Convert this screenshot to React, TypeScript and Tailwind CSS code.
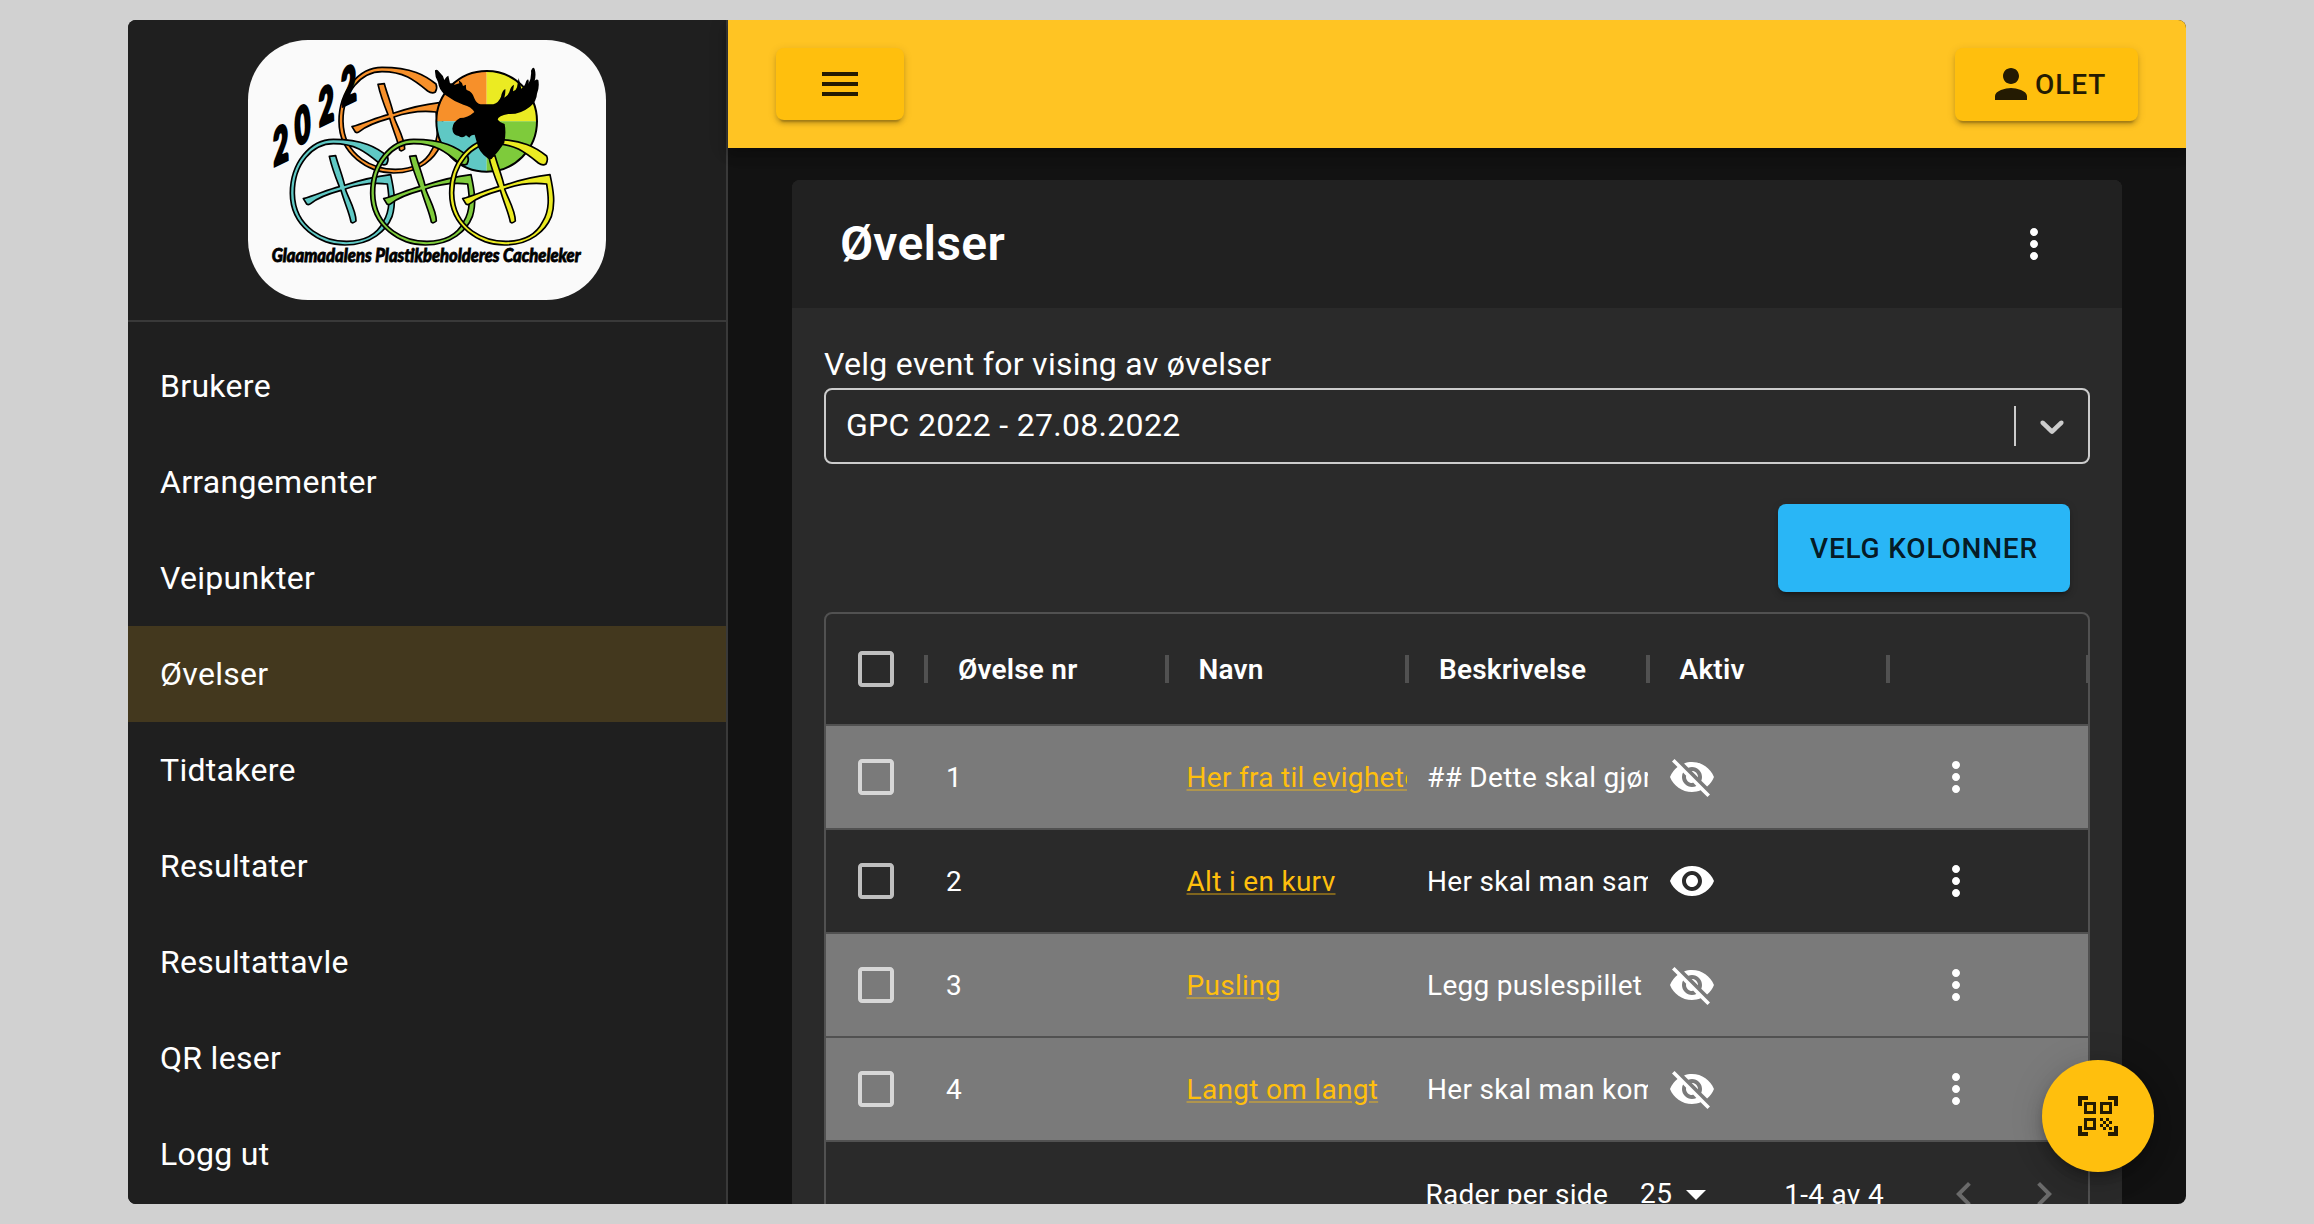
import React from "react";
import {
  MdArrowDropDown,
  MdCheckBoxOutlineBlank,
  MdKeyboardArrowLeft,
  MdKeyboardArrowRight,
  MdMenu,
  MdMoreVert,
  MdPerson,
  MdQrCodeScanner,
  MdVisibility,
  MdVisibilityOff,
} from "react-icons/md";

const menuItems = [
  "Brukere",
  "Arrangementer",
  "Veipunkter",
  "Øvelser",
  "Tidtakere",
  "Resultater",
  "Resultattavle",
  "QR leser",
  "Logg ut",
];

const columns = ["Øvelse nr", "Navn", "Beskrivelse", "Aktiv", ""];

const rows = [
  { nr: 1, name: "Her fra til evigheten", desc: "## Dette skal gjøres", active: false },
  { nr: 2, name: "Alt i en kurv", desc: "Her skal man samle", active: true },
  { nr: 3, name: "Pusling", desc: "Legg puslespillet", active: false },
  { nr: 4, name: "Langt om langt", desc: "Her skal man komme", active: false },
];

const gShape =
  "M472 378 C440 352 400 328 310 328 C240 328 181 400 181 490 C181 590 270 645 345 645 C425 645 470 600 486 560 C499 520 492 480 482 434 C430 440 385 452 344 466 C337 435 326 410 317 377 L298 379 C305 410 316 440 328 470 C290 480 255 497 220 506 L230 522 Q236 526 243 520 C265 502 300 490 333 481 C344 520 357 545 363 576 Q368 582 378 573 C378 540 355 505 346 477 C385 463 425 457 472 462 C478 500 482 540 460 575 C440 615 400 634 350 634 C290 634 195 600 193 490 C192 400 250 341 310 341 C375 341 405 365 447 399 Q460 408 470 402 Q477 390 472 378 Z";

const digits = [
  { d: "2", x: 133, y: 408 },
  { d: "0", x: 198, y: 348 },
  { d: "2", x: 269, y: 289 },
  { d: "2", x: 337, y: 229 },
];

function Logo() {
  return (
    <div className="h-[260px] w-[358px] overflow-hidden rounded-[60px] bg-[#fafafa]">
      <svg viewBox="54 30 1074 780" className="block h-full w-full">
        <g fill="#f7902a" stroke="#000" strokeWidth="5" strokeLinejoin="round">
          <path d={gShape} transform="translate(146 -216)" />
        </g>
        {digits.map((g) => (
          <text
            key={g.x}
            transform={`matrix(0.58 -0.28 0.1 1 ${g.x} ${g.y})`}
            fontFamily="Lato, sans-serif"
            fontWeight="900"
            fontSize="144"
            stroke="#000"
            strokeWidth="10"
            fontStyle="italic"
          >
            {g.d}
          </text>
        ))}
        <path d="M770 274 V123 A151 151 0 0 0 619 274 Z" fill="#f7902a" />
        <path d="M770 274 V123 A151 151 0 0 1 921 274 Z" fill="#ebeb22" />
        <path d="M770 274 V425 A151 151 0 0 1 619 274 Z" fill="#5fc8c4" />
        <path d="M770 274 V425 A151 151 0 0 0 921 274 Z" fill="#7ecb3b" />
        <circle cx="770" cy="274" r="151" fill="none" stroke="#000" strokeWidth="6" />
        <g stroke="#000" strokeWidth="5" strokeLinejoin="round">
          <path d={gShape} fill="#5fc8c4" />
          <path d={gShape} fill="#7ecb3b" transform="translate(241 0)" />
          <path d={gShape} fill="#ebeb22" transform="translate(478 0)" />
        </g>
        <path d="M615 121 Q621 116 628 126 Q640 136 643 150 Q650 138 655 137 L660 160 Q668 158 674 164 L688 160 L686 150 Q696 156 699 168 L708 164 Q707 180 712 181 Q727 185 733 205 Q740 222 752 223 L790 223 Q806 218 813 200 Q816 182 826 177 Q827 190 823 203 Q834 198 838 186 Q842 168 852 164 L849 184 Q858 182 861 172 L866 144 L874 176 Q884 170 889 152 L894 148 Q898 152 895 162 Q905 145 903 122 Q909 108 914 117 Q919 134 914 152 Q920 146 925 150 Q929 172 921 191 Q920 214 900 230 Q870 254 835 252 Q805 258 803 268 Q808 277 824 282 Q829 308 823 338 Q805 365 792 378 Q782 395 772 384 Q745 365 740 336 L734 314 Q722 314 718 323 L708 316 Q698 326 686 318 Q668 315 667 296 Q668 276 690 264 Q713 264 733 246 Q724 230 700 224 Q672 214 645 194 Q627 180 624 156 Q614 140 615 121 Z" fill="#000" />
        <text
          x="125"
          y="696"
          textLength="927"
          lengthAdjust="spacingAndGlyphs"
          fontFamily="Lato, sans-serif"
          fontWeight="900"
          fontStyle="italic"
          fontSize="57"
          stroke="#000"
          strokeWidth="2.5"
        >
          Glaamadalens Plastikbeholderes Cacheleker
        </text>
      </svg>
    </div>
  );
}

const buttonShadow =
  "shadow-[0_6px_2px_-4px_rgba(0,0,0,0.2),0_4px_4px_0_rgba(0,0,0,0.14),0_2px_10px_0_rgba(0,0,0,0.12)]";

function Sidebar() {
  return (
    <aside className="flex w-[600px] shrink-0 flex-col border-r-2 border-[#393939] bg-[#1f1f1f]">
      <div className="flex h-[302px] shrink-0 items-center justify-center border-b-2 border-[#393939]">
        <Logo />
      </div>
      <nav className="flex flex-col pt-4">
        {menuItems.map((item) => (
          <a
            key={item}
            className={`flex h-24 shrink-0 items-center px-8 text-[32px] leading-[48px] tracking-[0.3px] ${
              item === "Øvelser" ? "bg-[#43381e]" : ""
            }`}
          >
            {item}
          </a>
        ))}
      </nav>
    </aside>
  );
}

function TopBar() {
  return (
    <header className="relative z-10 flex h-32 shrink-0 items-center justify-between bg-[#ffc423] px-12 text-[#241b02] shadow-[0_4px_8px_-2px_rgba(0,0,0,0.2),0_8px_10px_0_rgba(0,0,0,0.14),0_2px_20px_0_rgba(0,0,0,0.12)]">
      <button className={`flex h-[72px] w-32 items-center justify-center rounded-lg bg-[#ffbf0d] ${buttonShadow}`}>
        <MdMenu className="size-12" />
      </button>
      <button
        className={`flex h-[73px] w-[183px] items-center rounded-lg bg-[#ffbf0d] pl-8 text-[28px] leading-[49px] font-[470] tracking-[0.9px] ${buttonShadow}`}
      >
        <MdPerson className="size-12 shrink-0" />
        OLET
      </button>
    </header>
  );
}

function EventSelect() {
  return (
    <div className="flex h-[76px] items-center rounded-lg border-2 border-[#ccc]">
      <span className="flex-1 pb-0.5 pl-5 text-[32px] tracking-[0.3px]">GPC 2022 - 27.08.2022</span>
      <span className="h-10 w-0.5 bg-[#ccc]" />
      <svg viewBox="0 0 20 20" className="mx-4 size-10" fill="#ccc">
        <path d="M4.516 7.548c0.436-0.446 1.043-0.481 1.576 0l3.908 3.747 3.908-3.747c0.533-0.481 1.141-0.446 1.574 0 0.436 0.445 0.408 1.197 0 1.615-0.406 0.418-4.695 4.502-4.695 4.502-0.217 0.223-0.502 0.335-0.787 0.335s-0.57-0.112-0.789-0.335c0 0-4.287-4.084-4.695-4.502s-0.436-1.17 0-1.615z" />
      </svg>
    </div>
  );
}

const gridCols = "grid grid-cols-[100px_240.5px_240.5px_240.5px_240.5px_200px] items-center";

function Separator() {
  return <span className="absolute top-1/2 -right-0.5 h-7 w-1 -translate-y-1/2 bg-[#515151]" />;
}

function Table() {
  return (
    <div className="mt-5 h-[640px] shrink-0 overflow-hidden rounded-lg border-2 border-[#515151] text-[28px] tracking-[0.3px]">
      <div className={`${gridCols} h-28 border-b-2 border-[#515151]`}>
        <div className="relative flex h-full items-center justify-center text-[#bfbfbf]">
          <MdCheckBoxOutlineBlank className="size-12" />
          <Separator />
        </div>
        {columns.map((c, i) => (
          <div key={i} className="relative flex h-full items-center pt-0.5 pl-8 font-semibold tracking-[0.2px]">
            {c}
            <Separator />
          </div>
        ))}
      </div>
      {rows.map((r) => (
        <div
          key={r.nr}
          className={`${gridCols} h-[104px] border-b-2 border-[#515151] ${r.active ? "" : "bg-[#7a7a7a]"}`}
        >
          <div className="flex justify-center text-white/70">
            <MdCheckBoxOutlineBlank className="size-12" />
          </div>
          <div className="pt-0.5 pl-5">{r.nr}</div>
          <div className="overflow-hidden pt-0.5 pl-5 whitespace-nowrap">
            <a className="text-[#ffbf0d] underline decoration-[#ffbf0d]/40">{r.name}</a>
          </div>
          <div className="overflow-hidden pt-0.5 pl-5 whitespace-nowrap">{r.desc}</div>
          <div className="pl-5">
            {r.active ? <MdVisibility className="size-12" /> : <MdVisibilityOff className="size-12" />}
          </div>
          <div className="pl-11">
            <MdMoreVert className="size-12" />
          </div>
        </div>
      ))}
      <div className="flex h-[104px] items-center justify-end pr-5">
        <span className="pt-0.5">Rader per side</span>
        <span className="ml-8">25</span>
        <MdArrowDropDown className="size-12" />
        <span className="ml-16 pt-0.5">1-4 av 4</span>
        <MdKeyboardArrowLeft className="ml-14 size-12 text-white/30" />
        <MdKeyboardArrowRight className="ml-8 size-12 text-white/30" />
      </div>
    </div>
  );
}

export default function App() {
  return (
    <div className="h-screen overflow-hidden bg-[#d1d1d1] px-32 py-5 font-['Roboto',sans-serif] text-white">
      <div className="relative flex h-full overflow-hidden rounded-lg bg-[#121212]">
        <Sidebar />
        <div className="flex min-w-0 flex-1 flex-col">
          <TopBar />
          <main className="flex min-h-0 flex-1 flex-col px-16 pt-8">
            <section className="shrink-0 overflow-hidden rounded-lg bg-[#2a2a2a]">
              <div className="flex h-32 items-center justify-between bg-[#212121] pr-16 pl-12">
                <h1 className="text-[48px] leading-[64px] font-semibold tracking-[0.3px]">Øvelser</h1>
                <MdMoreVert className="size-12" />
              </div>
              <div className="flex flex-col p-8">
                <label className="text-[32px] leading-[48px] tracking-[0.3px]">Velg event for vising av øvelser</label>
                <EventSelect />
                <div className="mt-10 flex justify-end pr-5">
                  <button
                    className={`flex h-[88px] w-[292px] items-center justify-center rounded-lg bg-[#29b6f6] pt-0.5 text-[28px] font-[470] tracking-[0.8px] text-black/87 ${buttonShadow}`}
                  >
                    VELG KOLONNER
                  </button>
                </div>
                <Table />
              </div>
            </section>
          </main>
        </div>
        <button className="absolute right-8 bottom-8 flex size-28 items-center justify-center rounded-full bg-[#ffbf0d] text-[#241b02] shadow-[0_6px_10px_-2px_rgba(0,0,0,0.2),0_12px_20px_0_rgba(0,0,0,0.14),0_2px_36px_0_rgba(0,0,0,0.12)]">
          <MdQrCodeScanner className="size-12" />
        </button>
      </div>
    </div>
  );
}
